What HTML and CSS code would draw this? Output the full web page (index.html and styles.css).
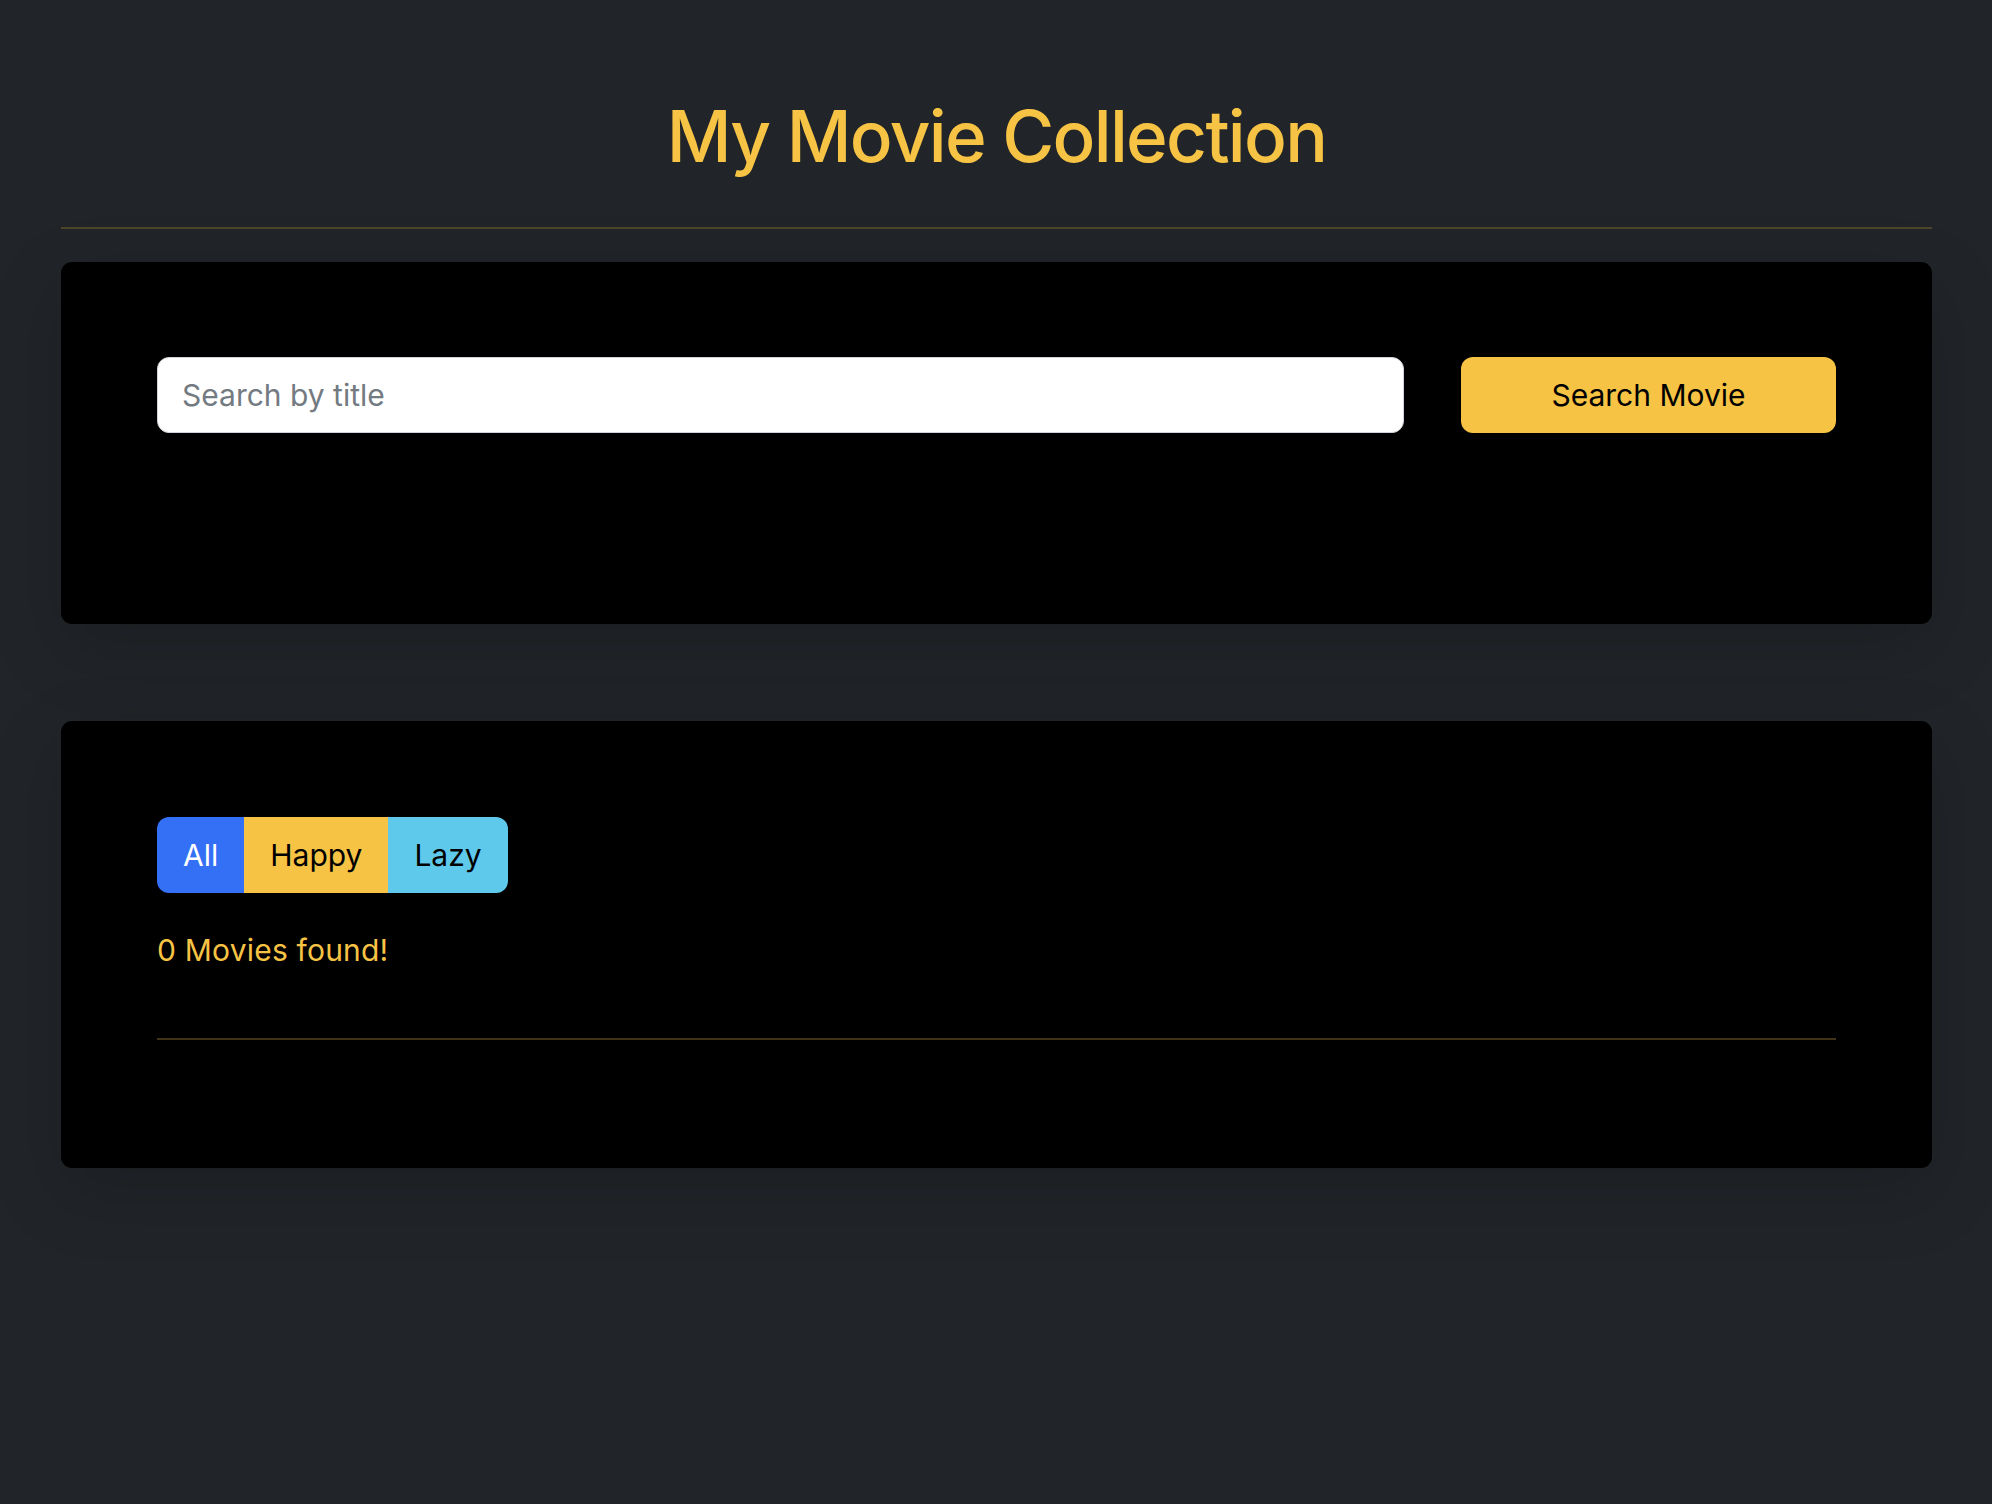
FILE: index.html
```html
<!DOCTYPE html>
<html lang="en">
<head>
<meta charset="utf-8">
<title>My Movie Collection</title>
<link rel="stylesheet" href="styles.css">
</head>
<body>
<div class="page">
  <h1 class="title">My Movie Collection</h1>
  <div class="rule"></div>

  <section class="card card-search">
    <form class="search-row">
      <input class="search-input" type="text" placeholder="Search by title">
      <button class="btn btn-warning search-btn" type="button">Search Movie</button>
    </form>
  </section>

  <section class="card card-list">
    <div class="btn-group">
      <button class="btn seg seg-all" type="button">All</button>
      <button class="btn seg seg-happy" type="button">Happy</button>
      <button class="btn seg seg-lazy" type="button">Lazy</button>
    </div>
    <p class="count">0 Movies found!</p>
    <div class="rule rule-inner"></div>
  </section>
</div>
</body>
</html>
```

FILE: styles.css
```css
* { box-sizing: border-box; }

html, body {
  margin: 0;
  padding: 0;
}

body {
  background: #212529;
  font-family: "Inter", "Noto Sans", sans-serif;
  color: #dee2e6;
  min-height: 1504px;
}

.page {
  padding: 93px 60px 0 61px;
}

.title {
  margin: 0;
  text-align: center;
  font-size: 71px;
  line-height: 86px;
  font-weight: 500;
  color: #f6c344;
  letter-spacing: -1.7px;
}

.rule {
  height: 2px;
  background: #4f4529;
  margin-top: 48px;
}

.card {
  background: #000;
  border-radius: 11px;
  box-shadow: 0 24px 72px rgba(0, 0, 0, 0.18);
}

.card-search {
  margin-top: 33px;
  padding: 95px 96px 191px 96px;
}

.search-row {
  display: flex;
  gap: 57px;
  margin: 0;
}

.search-input {
  flex: 1;
  height: 76px;
  border: 1.5px solid #ced4da;
  border-radius: 12px;
  background: #fff;
  padding: 0 24px;
  font-family: inherit;
  font-size: 30px;
  color: #212529;
  outline: none;
}

.search-input::placeholder {
  color: #737a81;
}

.btn {
  font-family: inherit;
  font-size: 30px;
  border: 0;
  cursor: pointer;
  color: #000;
}

.btn-warning {
  background: #f6c344;
}

.search-btn {
  width: 375px;
  height: 76px;
  border-radius: 12px;
}

.card-list {
  margin-top: 97px;
  padding: 96px 96px 128px 96px;
}

.btn-group {
  display: inline-flex;
  border-radius: 12px;
  overflow: hidden;
  height: 76px;
}

.seg {
  padding: 0 26px;
  height: 76px;
  line-height: 76px;
}

.seg-all {
  background: #3470f5;
  color: #fff;
}

.seg-happy {
  background: #f6c344;
}

.seg-lazy {
  background: #5fc9ec;
}

.count {
  margin: 35px 0 0 0;
  font-size: 30px;
  line-height: 45px;
  color: #f6c344;
  letter-spacing: 0.2px;
}

.rule-inner {
  margin-top: 65px;
  background: #3f3215;
}
```
